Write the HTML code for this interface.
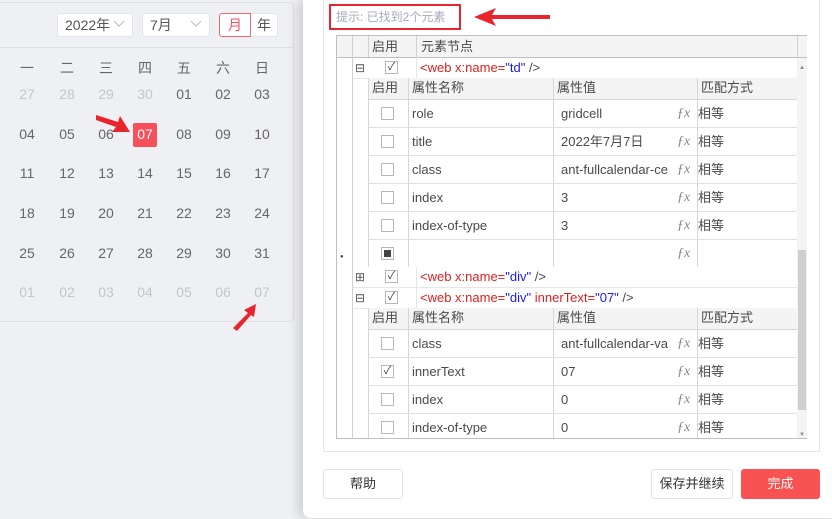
<!DOCTYPE html>
<html><head><meta charset="utf-8"><style>
*{margin:0;padding:0;box-sizing:border-box}
body{width:832px;height:519px;overflow:hidden;background:#eef0f4;position:relative;font-family:"Liberation Sans","Noto Sans CJK SC",sans-serif;font-size:13px;color:#444}
.a{position:absolute}
.card{left:-5px;top:2px;width:299px;height:320px;border:1px solid #dcdfe5;border-radius:4px;background:#eff0f4}
.sel{top:13px;height:24px;background:#fff;border:1px solid #e3e5ea;border-radius:3px;font-size:14px;color:#555;line-height:22px;padding-left:7px}
.wd{width:40px;text-align:center;font-size:14px;color:#666}
.d{width:40px;text-align:center;font-size:14px;color:#666}
.g{color:#c3c5c9}
.dlg{left:303px;top:0;width:540px;height:518px;background:#fff;border-radius:0 0 0 8px;box-shadow:-6px 0 10px rgba(0,0,0,.12)}
.sec{left:323px;top:-2px;width:497px;height:454px;border:1px solid #e6e6e6}
.hl{left:336px;top:35px;width:471px;height:404px;border:1px solid #bfbfbf;background:#fff}
.t{font-size:13px;color:#4a4a4a;line-height:20px}
.cb{width:13px;height:13px;border:1px solid #b8b8b8;background:#fff}
.btn{top:469px;height:30px;border:1px solid #e3e3e3;border-radius:3px;background:#fff;text-align:center;line-height:28px;font-size:13px;color:#333}
.r{color:#e02020}.b{color:#1a1aff}
</style></head><body>
<div class="a card"></div>
<div class="a sel" style="left:57px;width:76px">2022年</div>
<svg class="a" style="left:113px;top:20px" width="12" height="8"><polyline points="1,1 6,6 11,1" fill="none" stroke="#bbb" stroke-width="1"/></svg>
<div class="a sel" style="left:142px;width:68px">7月</div>
<svg class="a" style="left:190px;top:20px" width="12" height="8"><polyline points="1,1 6,6 11,1" fill="none" stroke="#bbb" stroke-width="1"/></svg>
<div class="a sel" style="left:250px;width:28px;padding:0;text-align:center;border-radius:0 3px 3px 0">年</div>
<div class="a sel" style="left:219px;width:32px;padding:0;text-align:center;border-color:#f06870;color:#f05060;border-radius:3px 0 0 3px">月</div>
<div class="a" style="left:0;top:47px;width:294px;height:1px;background:#dcdfe5"></div>
<div id="cal"></div>
<div class="a dlg"></div>
<div class="a sec"></div>
<div class="a" style="left:329px;top:4px;width:132px;height:26px;border:2px solid #e8242c"></div>
<div class="a" style="left:336px;top:8px;font-size:12px;color:#a6aabb">提示: 已找到2个元素</div>
<svg class="a" style="left:470px;top:6px" width="82" height="22"><polygon points="4,11 26,2 22,9 80,9 80,13 22,13 26,20" fill="#e8242c"/></svg>
<svg class="a" style="left:96px;top:112px" width="36" height="26"><polygon points="0,3 22,10 24,4 34,20 16,20 20,15 0,8" fill="#e8242c"/></svg>
<svg class="a" style="left:230px;top:302px" width="30" height="30"><polygon points="3,26 18,11 14,8 26,2 24,15 21,13 7,29" fill="#e8242c"/></svg>
<div class="a hl"></div>
<div id="tb"></div>
<div class="a btn" style="left:323px;width:80px">帮助</div>
<div class="a btn" style="left:651px;width:82px">保存并继续</div>
<div class="a btn" style="left:741px;width:79px;background:#f85252;border-color:#f85252;color:#fff">完成</div>
<script>
var h='';
var cx=[27,67,106,145,184,223,262];
var wd='一二三四五六日';
for(var i=0;i<7;i++)h+='<div class="a wd" style="left:'+(cx[i]-20)+'px;top:58px">'+wd[i]+'</div>';
var rows=[['27','28','29','30','01','02','03'],['04','05','06','07','08','09','10'],['11','12','13','14','15','16','17'],['18','19','20','21','22','23','24'],['25','26','27','28','29','30','31'],['01','02','03','04','05','06','07']];
var ry=[95,135,174,214,254,293];
for(var r=0;r<6;r++)for(var i=0;i<7;i++){var g=(r==0&&i<4)||r==5;var s=(r==1&&i==3);
if(s)h+='<div class="a" style="left:133px;top:'+(ry[r]-12)+'px;width:24px;height:24px;background:#f5505c;border-radius:2px"></div>';
h+='<div class="a d'+(g?' g':'')+'" style="left:'+(cx[i]-20)+'px;top:'+(ry[r]-9)+'px;'+(s?'color:#fff':'')+'">'+rows[r][i]+'</div>';}
document.getElementById('cal').innerHTML=h;
h='';
function L(x,y,w,hh,c){h+='<div class="a" style="left:'+x+'px;top:'+y+'px;width:'+w+'px;height:'+hh+'px;background:'+(c||'#d6d6d6')+'"></div>';}
function T(x,y,t,st){h+='<div class="a t" style="left:'+x+'px;top:'+y+'px;'+(st||'')+'">'+t+'</div>';}
function CB(x,y,c){h+='<div class="a cb" style="left:'+x+'px;top:'+y+'px;font-size:11px;line-height:11px;text-align:center;color:#444">'+(c==1?'✓':'')+(c==2?'<div style="margin:2px;width:7px;height:7px;background:#444"></div>':'')+'</div>';}
L(337,36,470,21,'#f4f4f4');L(337,57,470,1,'#bfbfbf');
L(352,36,1,403,'#d0d0d0');L(368,36,1,21,'#d0d0d0');L(416,36,1,21,'#d0d0d0');L(797,36,1,21,'#d0d0d0');
T(372,37,'启用');T(421,37,'元素节点');
L(797,58,10,380,'#f4f4f4');L(798,250,8,160,'#cfcfcf');
T(799,58,'▲','font-size:6px;color:#888');T(799,425,'▼','font-size:6px;color:#888');
function node(y,hgt,sym,html){L(353,y+hgt,444,1,'#e6e6e6');T(355,y+(hgt-20)/2,sym,'font-size:12px;color:#555');CB(385,y+(hgt-14)/2,1);L(416,y,1,hgt,'#e6e6e6');T(420,y+(hgt-20)/2,html);}
node(57,21,'⊟','<span class="r">&lt;web x:name=</span><span class="b">"td"</span> /&gt;');
node(267,20,'⊞','<span class="r">&lt;web x:name=</span><span class="b">"div"</span> /&gt;');
node(287,21,'⊟','<span class="r">&lt;web x:name=</span><span class="b">"div"</span> <span class="r">innerText=</span><span class="b">"07"</span> /&gt;');
function sub(y0,rs,endY){
 L(368,y0,429,21,'#f4f4f4');L(368,y0+21,429,1,'#d6d6d6');
 T(372,y0,'启用');T(412,y0,'属性名称');T(557,y0,'属性值');T(701,y0,'匹配方式');
 var cols=[368,408,553,697];for(var c=0;c<4;c++)L(cols[c],y0,1,endY-y0);
 var y=y0+22;
 for(var k=0;k<rs.length;k++){var r=rs[k];CB(381,y+7,r[0]);T(412,y+4,r[1]);T(561,y+4,r[2]);T(677,y+4,'ƒx','font-family:Liberation Serif,serif;font-style:italic;color:#888;font-size:14px');
  T(698,y+4,r[3]);y+=28;if(y<endY)L(368,y-1,429,1,'#e0e0e0');}
}
sub(78,[[0,'role','gridcell','相等'],[0,'title','2022年7月7日','相等'],[0,'class','ant-fullcalendar-ce','相等'],[0,'index','3','相等'],[0,'index-of-type','3','相等'],[2,'','','']],267);
sub(308,[[0,'class','ant-fullcalendar-va','相等'],[1,'innerText','07','相等'],[0,'index','0','相等'],[0,'index-of-type','0','相等']],438);
T(340,247,'●','font-size:6px;color:#444');
document.getElementById('tb').innerHTML=h;
</script>
</body></html>
